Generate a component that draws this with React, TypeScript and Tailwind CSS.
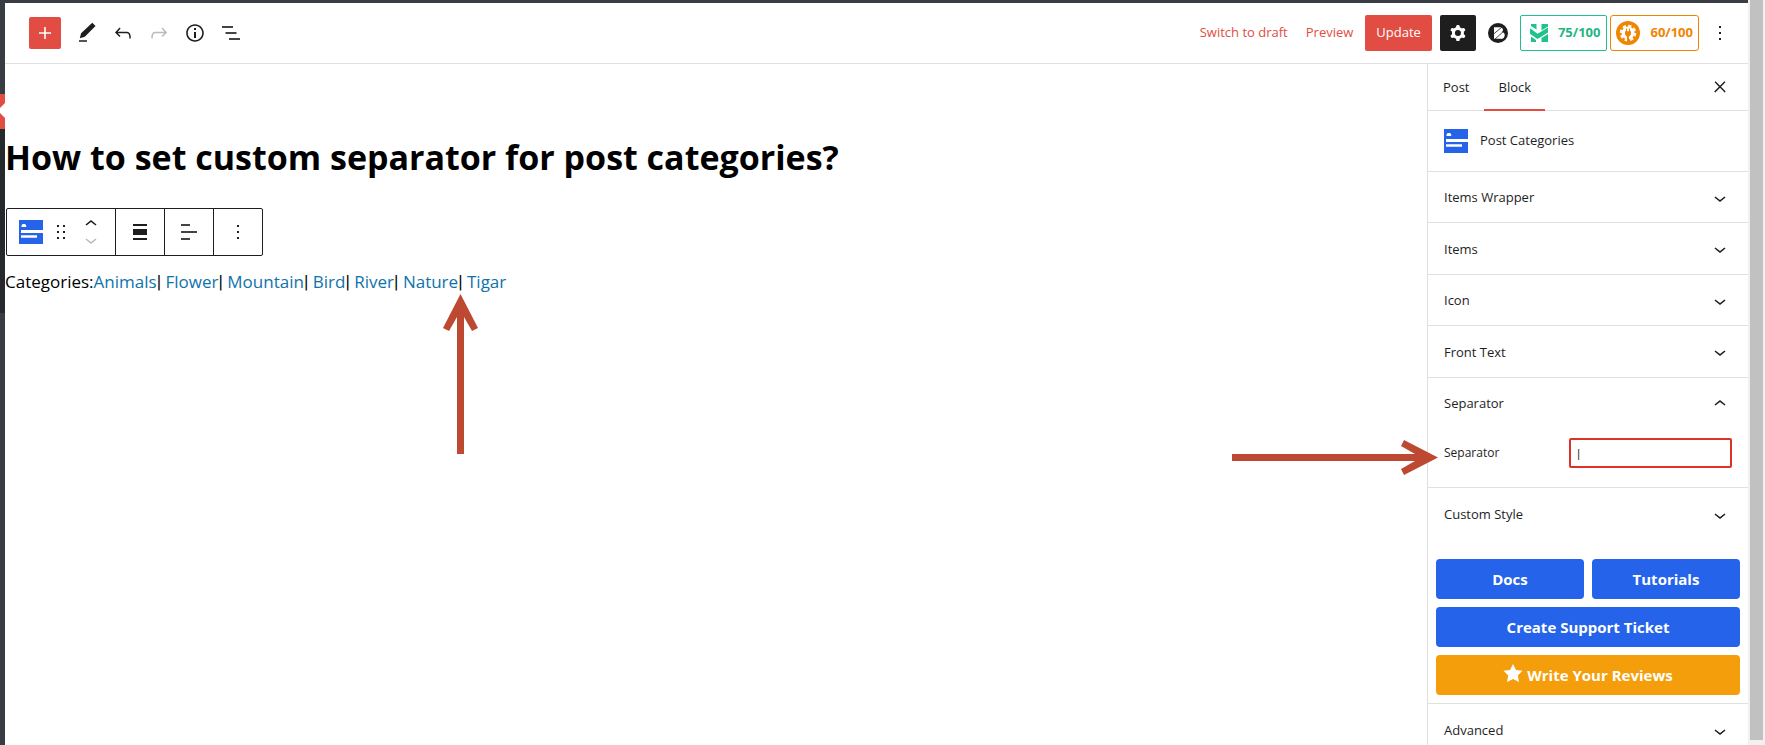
import React from "react";

const ICON = "fill-current shrink-0";

function Wp({ d, className = "" }: { d: string; className?: string }) {
  return (
    <svg viewBox="0 0 24 24" width="24" height="24" aria-hidden="true" className={`${ICON} ${className}`}>
      <path fillRule="evenodd" d={d} />
    </svg>
  );
}

const DOWN = "M17.5 11.6L12 16l-5.5-4.4.9-1.2L12 14l4.5-3.6 1 1.2z";
const UP = "M6.5 12.4L12 8l5.5 4.4-.9 1.2L12 10l-4.5 3.6-1-1.2z";
const MORE = "M13 19h-2v-2h2v2zm0-6h-2v-2h2v2zm0-6h-2V5h2v2z";
const GEAR =
  "M10.289 4.836A1 1 0 0111.275 4h1.306a1 1 0 01.987.836l.244 1.466c.787.26 1.503.679 2.108 1.218l1.393-.522a1 1 0 011.216.437l.653 1.13a1 1 0 01-.23 1.273l-1.148.944a6.025 6.025 0 010 2.435l1.149.946a1 1 0 01.23 1.272l-.653 1.13a1 1 0 01-1.216.437l-1.394-.522c-.605.54-1.32.958-2.108 1.218l-.244 1.466a1 1 0 01-.987.836h-1.306a1 1 0 01-.986-.836l-.244-1.466a5.995 5.995 0 01-2.108-1.218l-1.394.522a1 1 0 01-1.217-.436l-.653-1.131a1 1 0 01.23-1.272l1.149-.946a6.026 6.026 0 010-2.435l-1.148-.944a1 1 0 01-.23-1.272l.653-1.131a1 1 0 011.217-.437l1.393.522a5.994 5.994 0 012.108-1.218l.244-1.466zM14.929 12a3 3 0 11-6 0 3 3 0 016 0z";

function BlockIcon() {
  return (
    <svg viewBox="0 0 24 24" width="24" height="24" aria-hidden="true" className="shrink-0">
      <path fill="#2563eb" d="M0 0h24v24H0z" />
      <path fill="#fff" d="M2.500 7V5.500L3.500 4h2.500l1.200 1.300V7zM2 10h22v3H2zM2 15.200h16v2.600H2z" />
    </svg>
  );
}

function Panel({ title, open = false }: { title: string; open?: boolean }) {
  return (
    <button
      type="button"
      aria-expanded={open}
      className="flex h-full w-full items-center justify-between pt-0.5 pr-4 pl-4 text-left text-[13px]"
    >
      {title}
      <Wp d={open ? UP : DOWN} />
    </button>
  );
}

const categories = ["Animals", "Flower", "Mountain", "Bird", "River", "Nature", "Tigar"];

export default function App() {
  return (
    <div className="flex h-screen overflow-hidden bg-white font-['Open_Sans','Noto_Sans',sans-serif] text-[#1e1e1e]">
      <div className="flex w-[5px] shrink-0 flex-col bg-[#373d42]">
        <div className="h-[94px]" />
        <svg viewBox="0 0 5 35" className="h-[35px] w-[5px]" aria-hidden="true">
          <path fill="#e14d43" d="M0 0h5v35H0z" />
          <path fill="#fff" d="M5 9v15L0 19v-5z" />
        </svg>
        <div className="h-[184px] bg-[#25292d]" />
      </div>

      <div className="flex min-w-0 flex-1 flex-col border-t-[3px] border-[#373d42]">
        <header className="flex h-[61px] shrink-0 items-center justify-between border-b border-[#e0e0e0] pr-4 pl-6">
          <div className="flex items-center gap-3">
            <button type="button" aria-label="Add block" className="flex size-8 items-center justify-center rounded-[2px] bg-[#e14d43] text-white">
              <Wp d="M18 11.200h-5.200V6h-1.600v5.200H6v1.600h5.200V18h1.600v-5.200H18z" />
            </button>
            <button type="button" aria-label="Tools" className="ml-0.5">
              <Wp d="M17.300 1.800l3.200 3.100L9.800 15.800 4.800 17.200l1.300-5zM4 19.200h8v1.500H4z" />
            </button>
            <button type="button" aria-label="Undo">
              <Wp d="M18.300 11.700c-.6-.6-1.400-.9-2.300-.9H6.700l2.900-3.300-1.100-1-4.500 5L8.500 16l1-1-2.700-2.700H16c.5 0 .9.200 1.300.5 1 1 1 3.400 1 4.500v.3h1.500v-.2c0-1.500 0-4.300-1.500-5.700z" />
            </button>
            <button type="button" aria-label="Redo" disabled className="text-[#bbb]">
              <Wp d="M15.600 6.500l-1.100 1 2.900 3.300H8c-.9 0-1.700.3-2.300.9-1.400 1.500-1.400 4.200-1.400 5.600v.2h1.500v-.3c0-1.100 0-3.500 1-4.500.3-.3.7-.5 1.300-.5h9.200L14.500 15l1.100 1.100 4.600-4.600-4.600-5z" />
            </button>
            <button type="button" aria-label="Details">
              <Wp d="M12 3.200c-4.800 0-8.800 3.900-8.800 8.800 0 4.800 3.900 8.800 8.800 8.800 4.800 0 8.800-3.900 8.800-8.800 0-4.800-4-8.800-8.800-8.800zm0 16c-4 0-7.200-3.300-7.200-7.200C4.800 8 8 4.800 12 4.800s7.200 3.300 7.200 7.200c0 4-3.200 7.200-7.200 7.200zM11 17h2v-6h-2v6zm0-8h2V7h-2v2z" />
            </button>
            <button type="button" aria-label="List view">
              <Wp className="text-[#444]" d="M3 5h11v2H3zM6.500 11h11v2h-11zM10 17h11v2H10z" />
            </button>
          </div>
          <div className="flex items-center text-[13px]">
            <button type="button" className="text-[#e14d43]">Switch to draft</button>
            <button type="button" className="ml-[18px] text-[#e14d43]">Preview</button>
            <button type="button" className="ml-3 h-9 rounded-[2px] bg-[#e14d43] px-[11px] text-white">Update</button>
            <button type="button" aria-label="Settings" className="ml-2 flex size-9 items-center justify-center rounded-[2px] bg-[#1e1e1e] text-white">
              <Wp d={GEAR} />
            </button>
            <button type="button" aria-label="Block library" className="ml-3">
              <svg viewBox="0 0 20 20" width="20" height="20" aria-hidden="true">
                <circle cx="10" cy="10" r="10" fill="#1e1e1e" />
                <path fill="#fff" d="M6 4.200h6.500a2.800 2.800 0 0 1 1.500 4.900A3.400 3.400 0 0 1 12.500 15.800H6z" />
                <path stroke="#1e1e1e" strokeWidth=".8" d="M5 11.500l9-7.500M6.500 16.500L16 8" />
              </svg>
            </button>
            <button type="button" className="ml-3 flex h-9 items-center gap-2.5 rounded-[2px] border border-[#1fc18d] pr-1.5 pl-[9px] font-bold text-[#1fb583]">
              <svg viewBox="0 0 18 18" width="18" height="18" className="fill-[#1fc18d]" aria-hidden="true">
                <path d="M1 0h5.500v5.500L1 2zM11.500 0H18v2.500L11.500 6.500zM0 4.200l7.500 5.500L18 3.500v5L7.500 15 0 9.800zM1 12.500l5 3.500v2H1zM11.500 14L18 10v8h-6.500z" />
              </svg>
              75/100
            </button>
            <button type="button" className="ml-[3px] flex h-9 items-center gap-2.5 rounded-[3px] border border-[#f18500] px-[5px] font-bold text-[#f18500]">
              <svg viewBox="0 0 24 24" width="24" height="24" aria-hidden="true">
                <circle cx="12" cy="12" r="12" fill="#f18500" />
                <circle cx="12" cy="12" r="6.500" fill="#fff" />
                <circle cx="12" cy="12" r="7" fill="none" stroke="#fff" strokeWidth="2.600" strokeDasharray="3.200 2.298" />
                <path fill="#f18500" d="M9 10.200h1V7.500h1v2.700h2V7.500h1v2.700h1v2.300c0 1.500-1 2.500-2 2.800V21h-2v-5.700c-1-.3-2-1.300-2-2.800z" />
              </svg>
              60/100
            </button>
            <button type="button" aria-label="Options" className="ml-[9px]">
              <Wp d={MORE} />
            </button>
          </div>
        </header>

        <div className="flex min-h-0 flex-1">
          <main className="relative min-w-0 flex-1 pt-[68px]">
            <h1 className="text-[34px] leading-[50px] font-bold text-black">How to set custom separator for post categories?</h1>
            <div role="toolbar" aria-label="Block tools" className="mt-[26px] ml-px flex h-12 w-fit divide-x divide-[#1e1e1e] rounded-[2px] border border-[#1e1e1e]">
              <div className="flex w-[109px] items-center pl-3">
                <button type="button" aria-label="Post Categories"><BlockIcon /></button>
                <button type="button" aria-label="Drag" className="ml-1.5">
                  <Wp d="M8 7h2V5H8v2zm0 6h2v-2H8v2zm0 6h2v-2H8v2zm6-14v2h2V5h-2zm0 8h2v-2h-2v2zm0 6h2v-2h-2v2z" />
                </button>
                <div className="ml-1.5 flex flex-col">
                  <button type="button" aria-label="Move up" className="h-4 overflow-hidden"><Wp className="-mt-1" d={UP} /></button>
                  <button type="button" aria-label="Move down" className="h-4 overflow-hidden text-[#bbb]"><Wp className="-mt-1" d={DOWN} /></button>
                </div>
              </div>
              <button type="button" aria-label="Align" className="flex w-[49px] items-center justify-center">
                <Wp d="M5 4h14v2H5zM5 9h14v6H5zM5 18h14v2H5z" />
              </button>
              <button type="button" aria-label="Align text" className="flex w-[49px] items-center justify-center">
                <Wp className="text-[#444]" d="M4 4h9v2H4zM4 11h16v2H4zM4 18h9v2H4z" />
              </button>
              <button type="button" aria-label="More" className="flex w-12 items-center justify-center">
                <Wp d={MORE} />
              </button>
            </div>
            <p className="mt-3 text-[17px] leading-7 text-black">
              Categories:
              {categories.map((name, i) => (
                <React.Fragment key={name}>
                  <a href={`#${name}`} className="text-[#0e73ac]">{name}</a>
                  {i < categories.length - 1 && <span className="font-[Roboto,sans-serif] text-[18px]">{"| "}</span>}
                </React.Fragment>
              ))}
            </p>
            <svg viewBox="0 0 36 160" width="36" height="160" aria-hidden="true" className="absolute top-[230px] left-[438px] fill-[#bd4932]">
              <path d="M17.500 0L35 34l-6 3-8-14v137h-7V23L6 37l-6-3z" />
            </svg>
            <svg viewBox="0 0 206 36" width="206" height="36" aria-hidden="true" className="absolute top-[376px] -right-[11px] z-10 fill-[#bd4932]">
              <path d="M206 17.500L172 0l-3 6 14 8H0v7h183l-14 8 3 6z" />
            </svg>
          </main>

          <aside className="flex w-[321px] shrink-0 flex-col overflow-hidden border-l border-[#e0e0e0]">
            <div className="flex h-[47px] shrink-0 items-stretch border-b border-[#e0e0e0] pr-4 text-[13px]">
              <button type="button" className="px-[15px] pt-0.5">Post</button>
              <button type="button" className="-mb-px border-b-2 border-[#e14d43] px-3.5 pt-0.5">Block</button>
              <button type="button" aria-label="Close settings" className="ml-auto">
                <Wp d="M13 11.800l4.400-4.500-1-1L12 10.700 7.600 6.300l-1 1 4.300 4.500-4.700 4.700 1.100 1.100 4.700-4.800 4.700 4.800 1-1.100z" />
              </button>
            </div>
            <div className="flex h-[61px] shrink-0 items-center gap-3 border-b border-[#e0e0e0] pl-4 text-[13px]">
              <BlockIcon />
              <h2>Post Categories</h2>
            </div>
            <div className="grid h-[206px] shrink-0 grid-rows-4 divide-y divide-[#e0e0e0] border-b border-[#e0e0e0]">
              <Panel title="Items Wrapper" />
              <Panel title="Items" />
              <Panel title="Icon" />
              <Panel title="Front Text" />
            </div>
            <section className="shrink-0 border-b border-[#e0e0e0] pb-[19px]">
              <div className="h-[50px]">
                <Panel title="Separator" open />
              </div>
              <div className="mt-[10px] flex items-center justify-between pr-4 pl-4 text-[13px]">
                <label htmlFor="separator" className="text-[12px]">Separator</label>
                <input id="separator" type="text" defaultValue="|" className="h-[30px] w-[163px] rounded-[2px] border-2 border-[#dc3228] px-1.5 font-[Roboto,sans-serif] text-[13px] text-[#2c3338] outline-none" />
              </div>
            </section>
            <div className="h-[51px] shrink-0">
              <Panel title="Custom Style" />
            </div>
            <div className="grid shrink-0 grid-cols-2 gap-2 border-b border-[#e0e0e0] px-2 pt-5 pb-2 text-[15px] font-bold text-white">
              <a href="#docs" className="flex h-10 items-center justify-center rounded-[4px] bg-[#2563eb]">Docs</a>
              <a href="#tutorials" className="flex h-10 items-center justify-center rounded-[4px] bg-[#2563eb]">Tutorials</a>
              <a href="#support" className="col-span-2 flex h-10 items-center justify-center rounded-[4px] bg-[#2563eb]">Create Support Ticket</a>
              <a href="#reviews" className="col-span-2 flex h-10 items-center justify-center gap-1 rounded-[4px] bg-[#f59e0b]">
                <svg viewBox="0 0 20 20" width="20" height="20" className="mb-1 fill-white" aria-hidden="true">
                  <path d="M10 1l3 6 6.500.750-4.700 4.650L16 19l-6-3-6 3 1.200-6.600L.5 7.750 7 7z" />
                </svg>
                Write Your Reviews
              </a>
            </div>
            <div className="h-[51px] shrink-0">
              <Panel title="Advanced" />
            </div>
          </aside>
        </div>
      </div>

      <div className="w-[17px] shrink-0 bg-[#f1f1f1] pr-0.5 pb-[5px] pl-0.5">
        <div className="h-full bg-[#c1c1c1]" />
      </div>
    </div>
  );
}
